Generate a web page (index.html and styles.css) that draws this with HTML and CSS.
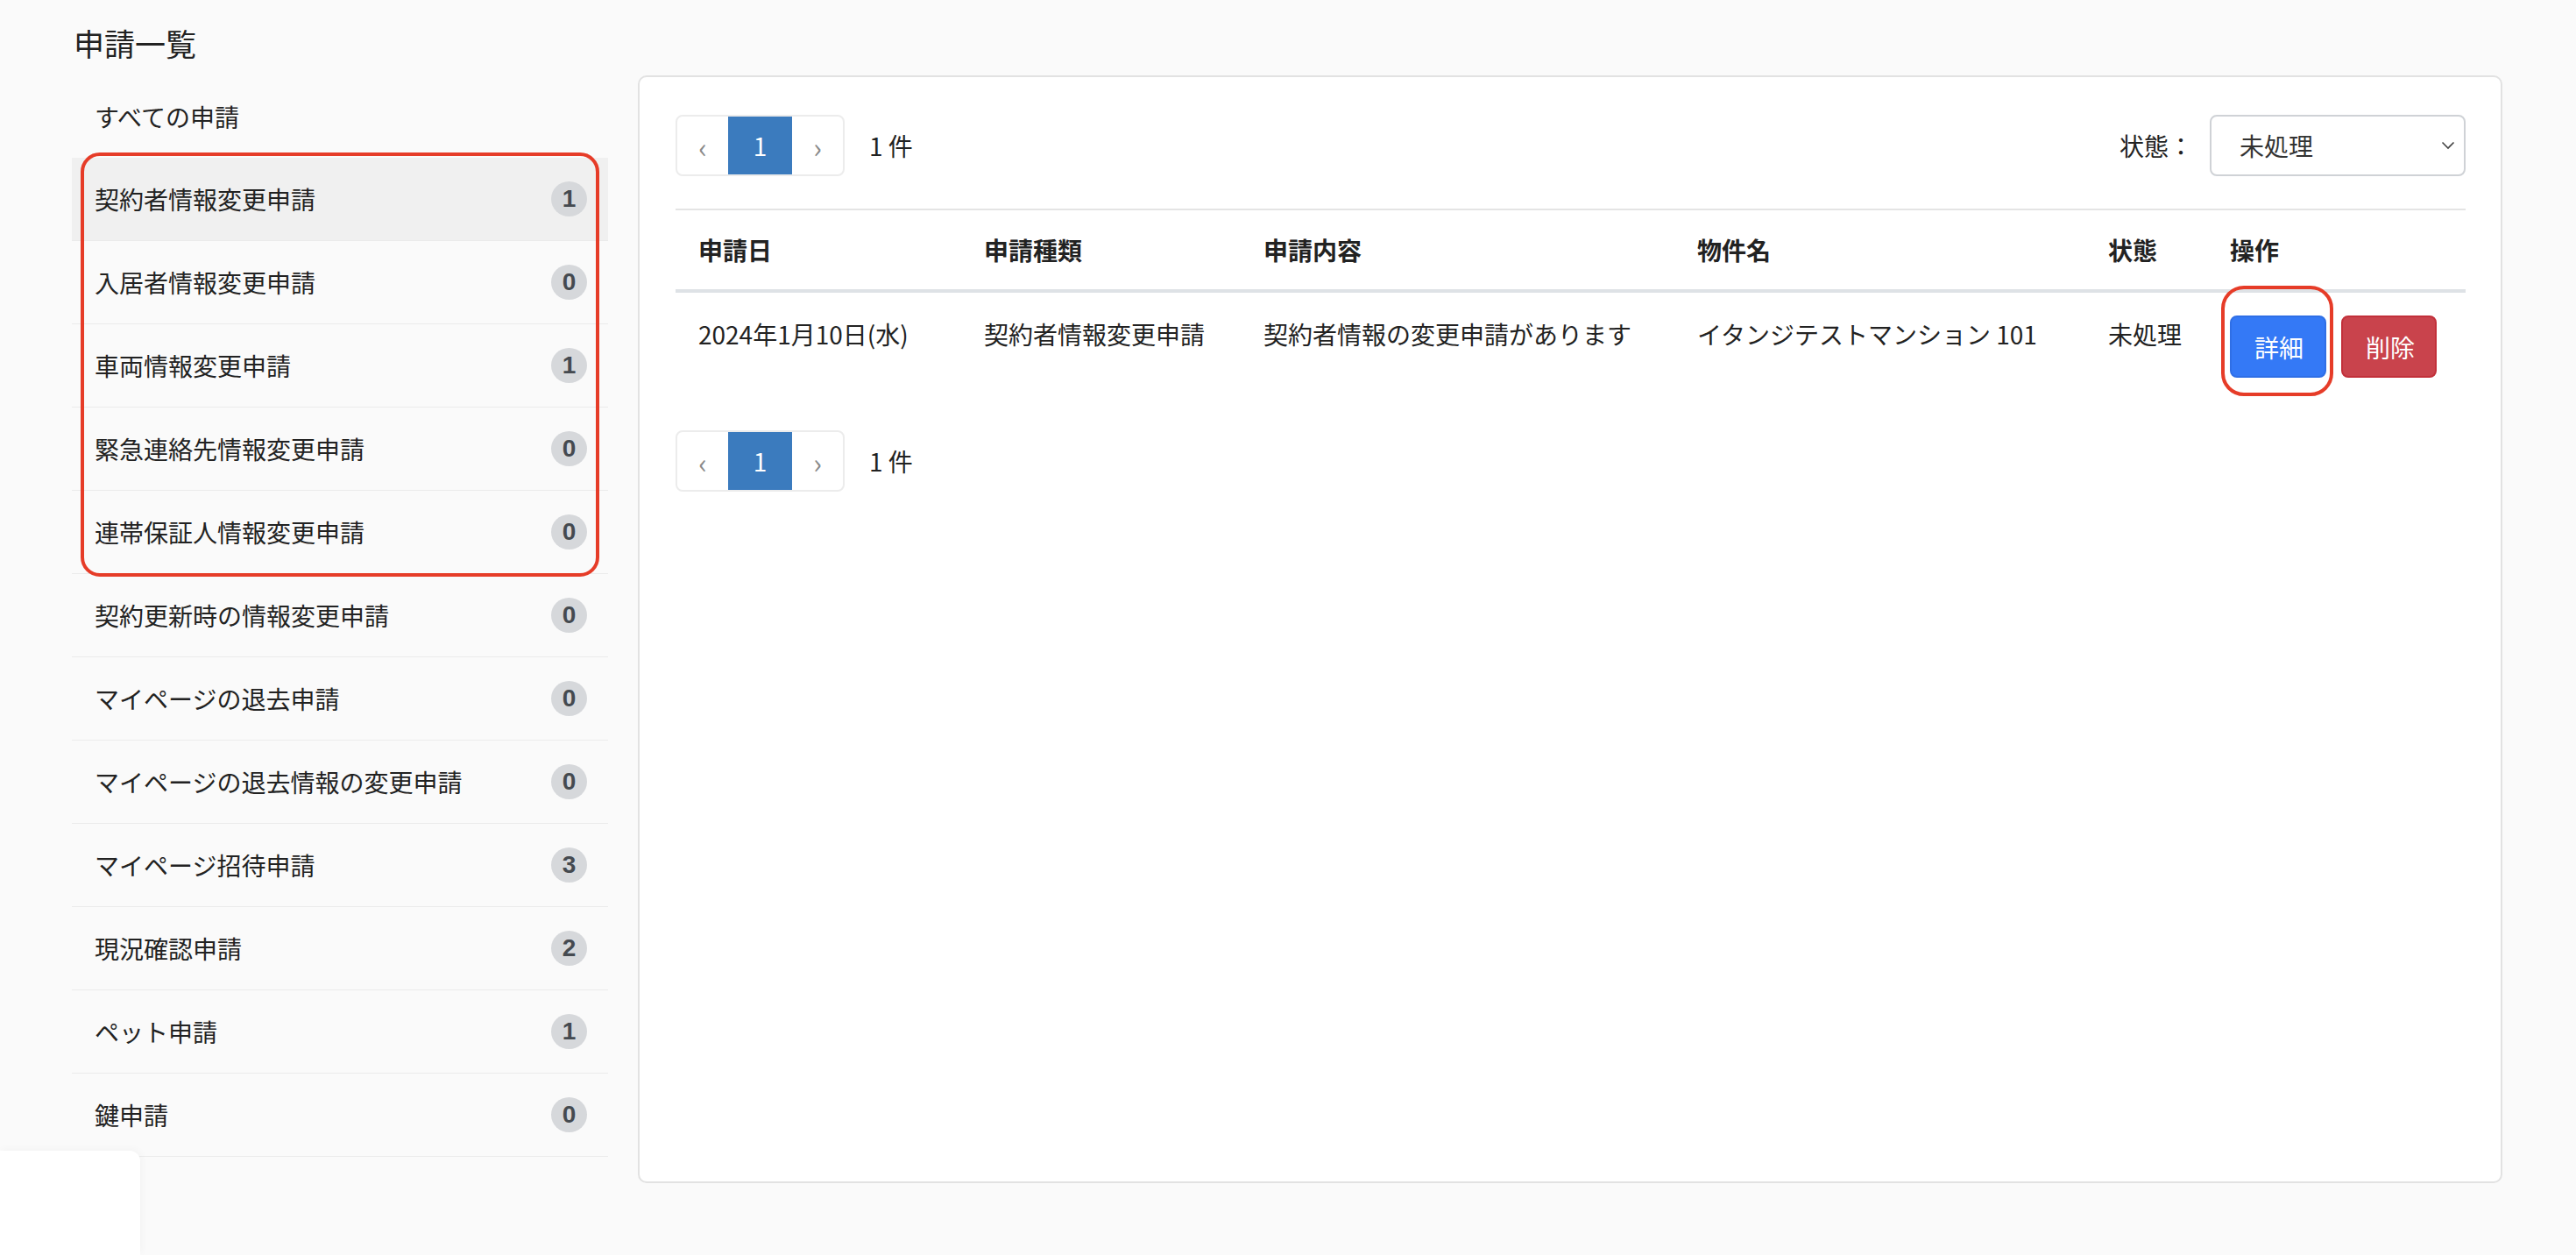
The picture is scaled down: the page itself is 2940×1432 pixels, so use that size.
FILE: index.html
```html
<!DOCTYPE html>
<html lang="ja">
<head>
    <meta charset="UTF-8">
    <meta name="viewport" content="width=device-width, initial-scale=1.0">
    <title>申請一覧</title>
    <link rel="stylesheet" href="styles.css">
</head>
<body>
    <div class="page">
        <h1 class="page-title">申請一覧</h1>
        <div class="layout">
            <aside class="side-menu">
                <a class="menu-item">すべての申請</a>
                <div class="menu-group marked">
                    <a class="menu-item active">契約者情報変更申請<span class="count">1</span></a>
                    <a class="menu-item">入居者情報変更申請<span class="count">0</span></a>
                    <a class="menu-item">車両情報変更申請<span class="count">1</span></a>
                    <a class="menu-item">緊急連絡先情報変更申請<span class="count">0</span></a>
                    <a class="menu-item">連帯保証人情報変更申請<span class="count">0</span></a>
                </div>
                <a class="menu-item">契約更新時の情報変更申請<span class="count">0</span></a>
                <a class="menu-item">マイページの退去申請<span class="count">0</span></a>
                <a class="menu-item">マイページの退去情報の変更申請<span class="count">0</span></a>
                <a class="menu-item">マイページ招待申請<span class="count">3</span></a>
                <a class="menu-item">現況確認申請<span class="count">2</span></a>
                <a class="menu-item">ペット申請<span class="count">1</span></a>
                <a class="menu-item">鍵申請<span class="count">0</span></a>
            </aside>

            <main class="card">
                <div class="toolbar">
                    <div class="pager-wrap">
                        <ul class="pager">
                            <li class="pager-arrow">‹</li>
                            <li class="pager-current">1</li>
                            <li class="pager-arrow">›</li>
                        </ul>
                        <span class="total">1 件</span>
                    </div>
                    <div class="status-filter">
                        <span class="status-label">状態：</span>
                        <div class="select-box">
                            <span>未処理</span>
                            <svg class="chevron" width="16" height="10" viewBox="0 0 16 10">
                                <path d="M1.5 1.5 L8 8 L14.5 1.5" fill="none" stroke="#444" stroke-width="1.6"/>
                            </svg>
                        </div>
                    </div>
                </div>

                <table class="request-table">
                    <thead>
                        <tr>
                            <th class="col-date">申請日</th>
                            <th class="col-type">申請種類</th>
                            <th class="col-body">申請内容</th>
                            <th class="col-name">物件名</th>
                            <th class="col-state">状態</th>
                            <th class="col-ops">操作</th>
                        </tr>
                    </thead>
                    <tbody>
                        <tr>
                            <td>2024年1月10日(水)</td>
                            <td>契約者情報変更申請</td>
                            <td>契約者情報の変更申請があります</td>
                            <td>イタンジテストマンション 101</td>
                            <td>未処理</td>
                            <td>
                                <div class="ops">
                                    <span class="marked-btn"><button class="btn btn-blue">詳細</button></span>
                                    <button class="btn btn-red">削除</button>
                                </div>
                            </td>
                        </tr>
                    </tbody>
                </table>

                <div class="pager-wrap bottom-pager">
                    <ul class="pager">
                        <li class="pager-arrow">‹</li>
                        <li class="pager-current">1</li>
                        <li class="pager-arrow">›</li>
                    </ul>
                    <span class="total">1 件</span>
                </div>
            </main>
        </div>
    </div>
    <div class="corner-box"></div>
</body>
</html>
```

FILE: styles.css
```css
body {
    margin: 0;
    padding: 0;
    background: #fafafa;
    color: #222;
    font-family: "Noto Sans CJK JP", "Noto Sans", sans-serif;
    font-size: 28px;
    overflow: hidden;
}

.page {
    padding: 24px 84px 0 82px;
}

.page-title {
    margin: 0 0 12px 2px;
    font-size: 35px;
    font-weight: normal;
    line-height: 50px;
    color: #222;
}

.layout {
    display: flex;
    align-items: flex-start;
}

/* Left menu */
.side-menu {
    width: 612px;
    flex-shrink: 0;
    display: flex;
    flex-direction: column;
}

.menu-item {
    display: flex;
    align-items: center;
    justify-content: space-between;
    height: 94px;
    padding: 0 24px 0 26px;
    border-bottom: 1px solid #ebebeb;
    color: #222;
    line-height: 1;
    cursor: pointer;
}

.side-menu > .menu-item:first-child {
    border-bottom: none;
}

.menu-item.active {
    background: #f0f0f0;
}

.count {
    display: flex;
    align-items: center;
    justify-content: center;
    width: 41px;
    height: 40px;
    border-radius: 50%;
    background: #d6d8db;
    color: #454a50;
    font-size: 28px;
    font-weight: bold;
    font-family: "Liberation Sans", "Noto Sans", sans-serif;
}

.menu-group {
    display: flex;
    flex-direction: column;
}

.marked {
    position: relative;
}

.marked::after {
    content: "";
    position: absolute;
    top: -6px;
    bottom: -3px;
    left: 10px;
    right: 10px;
    border: 4px solid #e63c28;
    border-radius: 22px;
    pointer-events: none;
}

/* Main card */
.card {
    margin-left: 34px;
    flex: 1;
    height: 1264px;
    box-sizing: border-box;
    padding: 43px 40px 0 41px;
    background: #fff;
    border: 2px solid #e2e2e2;
    border-radius: 10px;
}

.toolbar {
    display: flex;
    justify-content: space-between;
    align-items: center;
}

.pager-wrap {
    display: flex;
    align-items: center;
    gap: 28px;
}

.pager {
    display: flex;
    margin: 0;
    padding: 0;
    list-style: none;
    height: 70px;
    border: 2px solid #ececec;
    border-radius: 8px;
    box-sizing: border-box;
    overflow: hidden;
}

.pager li {
    display: flex;
    align-items: center;
    justify-content: center;
}

.pager-arrow {
    width: 58px;
    color: #8a8a8a;
    font-size: 32px;
    padding-top: 2px;
}

.pager-current {
    width: 73px;
    background: #3b7bbe;
    color: #fff;
    font-size: 28px;
}

.total {
    font-size: 28px;
    color: #222;
}

.status-filter {
    display: flex;
    align-items: center;
    gap: 19px;
}

.select-box {
    display: flex;
    align-items: center;
    justify-content: space-between;
    width: 292px;
    height: 70px;
    box-sizing: border-box;
    padding: 0 10px 0 32px;
    border: 2px solid #cfd2d6;
    border-radius: 8px;
    color: #333;
}

/* Table */
.request-table {
    width: 100%;
    margin-top: 37px;
    border-collapse: collapse;
    border-top: 2px solid #e4e4e4;
}

.request-table th,
.request-table td {
    padding: 24px 26px;
    text-align: left;
    vertical-align: top;
    line-height: 42px;
    white-space: nowrap;
}

.request-table th {
    font-weight: bold;
    border-bottom: 4px solid #dee2e6;
}

.request-table td {
    padding-top: 26px;
}

.col-date { width: 274px; }
.col-type { width: 267px; }
.col-body { width: 443px; }
.col-name { width: 417px; }
.col-state { width: 87px; }

.ops {
    display: flex;
    gap: 17px;
}

.btn {
    height: 71px;
    padding: 0 26px;
    border-radius: 8px;
    color: #fff;
    font-family: inherit;
    font-size: 28px;
    cursor: pointer;
}

.btn-blue {
    width: 110px;
    background: #3479f6;
    border: 2px solid #2f6fe6;
}

.btn-red {
    width: 109px;
    background: #c9434c;
    border: 2px solid #c2303a;
}

.marked-btn {
    position: relative;
    display: inline-block;
}

.marked-btn::after {
    content: "";
    position: absolute;
    top: -34px;
    bottom: -21px;
    left: -10px;
    right: -8px;
    border: 4px solid #e63c28;
    border-radius: 26px;
    pointer-events: none;
}

.bottom-pager {
    margin-top: 36px;
}

.corner-box {
    position: fixed;
    left: 0;
    bottom: 0;
    width: 160px;
    height: 119px;
    background: #fff;
    border-top-right-radius: 12px;
    box-shadow: 2px -2px 8px rgba(0, 0, 0, 0.03);
}
```
